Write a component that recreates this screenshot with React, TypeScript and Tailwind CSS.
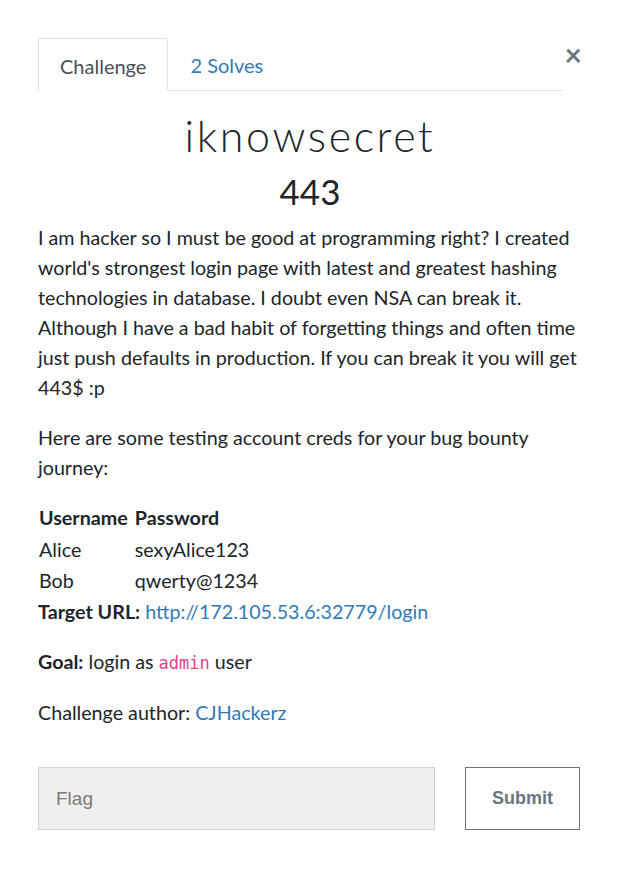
export default function App() {
  const creds = [
    { user: 'Alice', pass: 'sexyAlice123' },
    { user: 'Bob', pass: 'qwerty@1234' },
  ];

  return (
    <div className="min-h-[885px] w-[620px] bg-white text-[#212529]" style={{ fontFamily: 'Lato, "Noto Sans", sans-serif' }}>
      <div className="relative px-[38px] pt-[38px]">
        <button className="absolute right-[38px] top-[39px] text-[30px] leading-none text-[#6c757d] font-bold">×</button>

        <div className="mr-[19px] flex border-b border-[#dee2e6] text-[20px]">
          <div className="-mb-px rounded-t-[4px] border border-[#dee2e6] border-b-white bg-white px-[21px] pt-[15px] pb-[12px] leading-[24px] text-[#495057]">
            Challenge
          </div>
          <div className="px-[22px] pt-[15px] pb-[12px] leading-[24px] text-[#337ab7]">2 Solves</div>
        </div>

        <h2 className="mt-[20px] text-center text-[43px] font-light leading-[50px] tracking-[2.6px] text-[#212529]">
          iknowsecret
        </h2>
        <h3 className="mt-[10px] text-center text-[35px] leading-[40px] text-[#212529]">443</h3>

        <div className="mt-[12px] text-[19.7px] leading-[30px] text-[#212529]">
          <p className="mb-[20px]">
            I am hacker so I must be good at programming right? I created world's strongest login page
            with latest and greatest hashing technologies in database. I doubt even NSA can break it.
            Although I have a bad habit of forgetting things and often time just push defaults in
            production. If you can break it you will get 443$ :p
          </p>
          <p className="mb-[19px]">Here are some testing account creds for your bug bounty journey:</p>

          <table className="ml-[1px]">
            <thead>
              <tr>
                <th className="pr-[7px] text-left font-bold leading-[32px]">Username</th>
                <th className="text-left font-bold leading-[32px]">Password</th>
              </tr>
            </thead>
            <tbody>
              {creds.map((c) => (
                <tr key={c.user}>
                  <td className="leading-[31px]">{c.user}</td>
                  <td className="leading-[31px]">{c.pass}</td>
                </tr>
              ))}
            </tbody>
          </table>

          <p className="mb-[20px] mt-[1px]">
            <strong className="font-bold">Target URL:</strong>{' '}
            <a className="text-[#337ab7]">http://172.105.53.6:32779/login</a>
          </p>
          <p className="mb-[20px]">
            <strong className="font-bold">Goal:</strong> login as{' '}
            <code className="text-[17px] text-[#e83e8c]" style={{ fontFamily: '"DejaVu Sans Mono", monospace' }}>admin</code> user
          </p>
          <p>
            Challenge author: <a className="text-[#337ab7]">CJHackerz</a>
          </p>
        </div>

        <div className="mt-[39px] flex items-stretch gap-[30px] pr-[1px]">
          <input
            className="h-[63px] w-[397px] border border-[#ced4da] bg-[#efefef] px-[17px] text-[19px] text-[#495057] outline-none placeholder:text-[#7b7b7b]"
            style={{ fontFamily: '"Liberation Sans", Arial, sans-serif' }}
            placeholder="Flag"
          />
          <button
            className="h-[63px] w-[115px] border border-[#6c757d] bg-white text-[18px] font-bold text-[#6c757d]"
            style={{ fontFamily: '"Liberation Sans", Arial, sans-serif' }}
          >
            Submit
          </button>
        </div>
      </div>
    </div>
  );
}
